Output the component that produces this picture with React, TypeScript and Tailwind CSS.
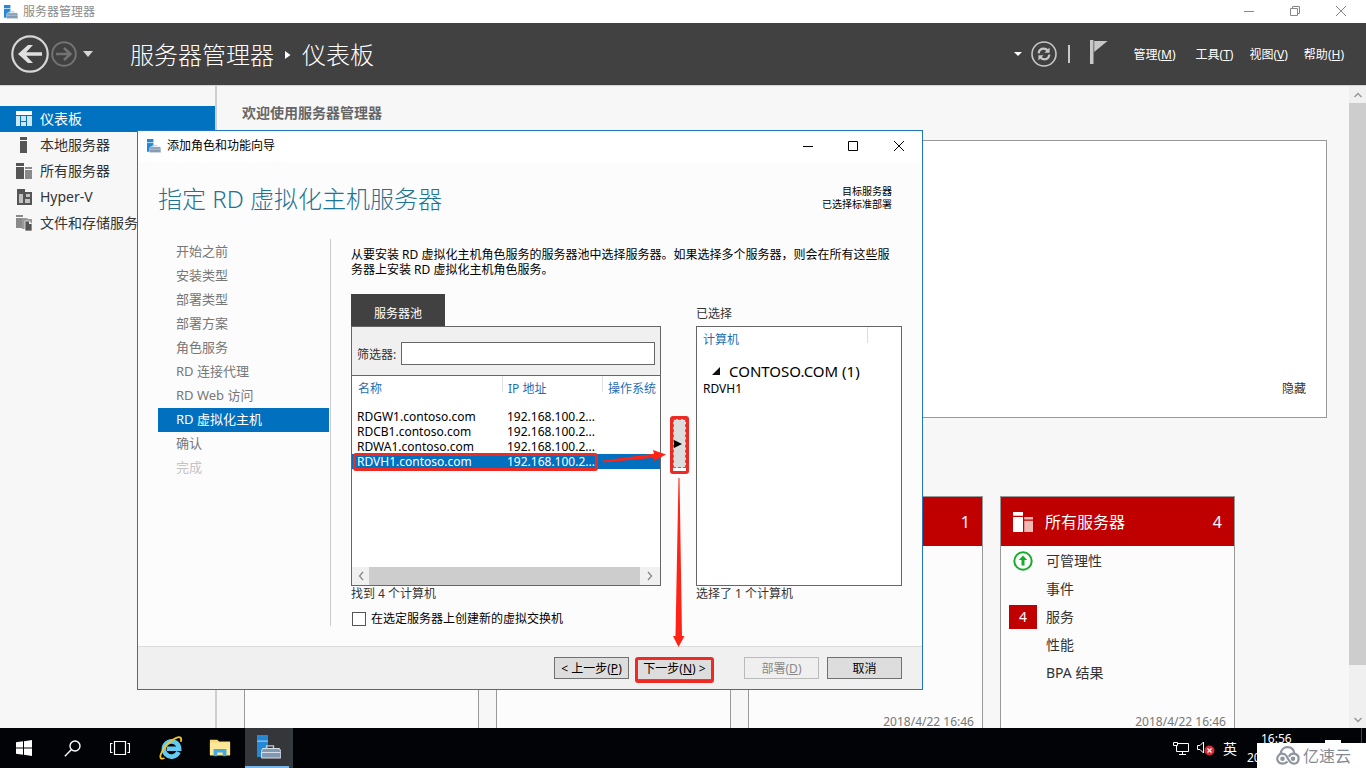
import type { ReactNode } from "react";

const uiFont = "font-['Noto_Sans','Noto_Sans_CJK_SC',sans-serif]";

function ServerManagerIcon({ className }: { className: string }) {
  return (
    <svg viewBox="0 0 24 24" className={className} aria-hidden="true">
      <path d="M0 0h11v6H0z" fill="#2389d6" />
      <path d="M0 7h11v6H7v9H0z" fill="#2389d6" />
      <path d="M0 6.2h11" stroke="#cfe6f7" strokeWidth="1" />
      <path d="M9.5 13.5v-2.6h7v2.6" fill="none" stroke="#b9c9d8" strokeWidth="1.4" />
      <path d="M5.5 13.5h17l1.3 3V23H4.5v-6.5z" fill="#8199b3" stroke="#d6dfe8" strokeWidth="1" />
      <path d="M5 17.5h18.5" stroke="#d6dfe8" strokeWidth="1" />
    </svg>
  );
}

function DashboardIcon() {
  return (
    <svg viewBox="0 0 16 16" className="size-4" aria-hidden="true">
      <path d="M0 0h16v4H0z" fill="#fff" />
      <path d="M0 5h4v10H0zM5 5h5v5H5zM5 11h5v4H5zM11 5h5v10h-5z" fill="#cfe6f6" />
    </svg>
  );
}

function LocalServerIcon() {
  return (
    <svg viewBox="0 0 16 16" className="size-4" aria-hidden="true">
      <path d="M4 0h7v3H4zM4 4h7v12H4z" fill="#555" />
    </svg>
  );
}

function AllServersIcon({ className, front, back }: { className: string; front: string; back: string }) {
  return (
    <svg viewBox="0 0 16 16" className={className} aria-hidden="true">
      <path d="M0 0h8v3H0zM0 4h8v12H0z" fill={front} />
      <path d="M9 4h7v2H9zM9 7h7v9H9z" fill={back} />
    </svg>
  );
}

function HyperVIcon() {
  return (
    <svg viewBox="0 0 16 16" className="size-4" aria-hidden="true">
      <path d="M1 0h8v3h7v13H1z" fill="#555" />
      <path d="M3 5h4v9H3zM10 5h4v3h-4zM9 10h5v4H9z" fill="#c0c0c0" />
    </svg>
  );
}

function StorageIcon() {
  return (
    <svg viewBox="0 0 16 16" className="size-4" aria-hidden="true">
      <path d="M0 0h7v2H0zM0 3h7v10H0z" fill="#8a8a8a" />
      <path d="M6 3h5l1 1h4v10H6z" fill="#999" />
      <path d="M9 6h4l3 3v7H9z" fill="#555" stroke="#f7f7f7" strokeWidth=".7" />
      <path d="M13 6v3h3z" fill="#eee" />
    </svg>
  );
}

const sideItems: { label: string; icon: ReactNode; active?: boolean }[] = [
  { label: "仪表板", icon: <DashboardIcon />, active: true },
  { label: "本地服务器", icon: <LocalServerIcon /> },
  { label: "所有服务器", icon: <AllServersIcon className="size-4" front="#555" back="#8a8a8a" /> },
  { label: "Hyper-V", icon: <HyperVIcon /> },
  { label: "文件和存储服务", icon: <StorageIcon /> },
];

const menus = [
  { label: "管理", key: "M", gap: "mr-5" },
  { label: "工具", key: "T", gap: "mr-4" },
  { label: "视图", key: "V", gap: "mr-4" },
  { label: "帮助", key: "H", gap: "mr-[22px]" },
];

function TitleBar() {
  return (
    <div className="flex h-[23px] shrink-0 items-center bg-white pl-1 text-xs text-[#8a8a8a]">
      <ServerManagerIcon className="size-3.5" />
      <span className="ml-[5px] flex-1">服务器管理器</span>
      <div className="flex self-start text-[#888]">
        <button aria-label="最小化" className="grid h-[21px] w-[46px] place-items-center">
          <svg className="size-3" viewBox="0 0 12 12" fill="none" stroke="currentColor"><path d="M1 6.500h10" /></svg>
        </button>
        <button aria-label="还原" className="grid h-[21px] w-[46px] place-items-center">
          <svg className="size-3" viewBox="0 0 12 12" fill="none" stroke="currentColor"><path d="M1.500 3.500h7v7h-7zM3.500 3.500v-2h7v7h-2" /></svg>
        </button>
        <button aria-label="关闭" className="mr-[2px] grid h-[21px] w-[46px] place-items-center">
          <svg className="size-3" viewBox="0 0 12 12" fill="none" stroke="currentColor"><path d="M1 1l10 10M11 1L1 11" /></svg>
        </button>
      </div>
    </div>
  );
}

function Header() {
  return (
    <header className="flex h-[62px] shrink-0 items-center bg-[#414141] pl-[11px] text-white">
      <button aria-label="后退">
        <svg className="size-[38px]" viewBox="0 0 38 38" fill="none">
          <circle cx="19" cy="19" r="17.700" stroke="#d6d6d6" strokeWidth="2.200" />
          <path d="M31 17.200v3.600H15.200l6.800 7.200h-5L7 19l10-9h5l-6.800 7.200z" fill="#e0e0e0" />
        </svg>
      </button>
      <button aria-label="前进" className="ml-[2px]">
        <svg className="size-[26px]" viewBox="0 0 26 26" fill="none" stroke="#737373">
          <circle cx="13" cy="13" r="11.800" strokeWidth="2" />
          <path d="M5 13h14M13 7l6.500 6-6.500 6" strokeWidth="2.500" />
        </svg>
      </button>
      <button aria-label="历史记录" className="ml-[5px]">
        <svg className="h-1.5 w-3" viewBox="0 0 12 6"><path d="M1 0h10L6 6z" fill="#d6d6d6" /></svg>
      </button>
      <div className="ml-9 flex flex-1 items-center pt-px text-2xl font-light">
        <span>服务器管理器</span>
        <svg className="mx-[11px] h-2 w-1.5" viewBox="0 0 6 8"><path d="M0 0l5.500 4L0 8z" fill="#fff" /></svg>
        <span>仪表板</span>
      </div>
      <button aria-label="选项" className="mr-[9px]">
        <svg className="h-1 w-2" viewBox="0 0 8 4"><path d="M0 0h8L4 4z" fill="#fff" /></svg>
      </button>
      <button aria-label="刷新">
        <svg className="size-[26px]" viewBox="0 0 26 26" fill="none" stroke="#c8c8c8">
          <circle cx="13" cy="13" r="12" strokeWidth="1.600" />
          <path d="M7.600 12.300c.5-3.300 2.700-4.600 5-4.600 1.900 0 3.200.7 4.300 2M18.400 13.700c-.5 3.300-2.700 4.600-5 4.600-1.900 0-3.200-.7-4.300-2" strokeWidth="2.200" />
          <path d="M18.600 6.500v5.200h-5.200zM7.400 19.500v-5.200h5.200z" fill="#c8c8c8" stroke="none" />
        </svg>
      </button>
      <div className="mb-px ml-[11px] mr-5 h-[18px] w-[2px] bg-[#c8c8c8]" />
      <button aria-label="通知" className="mb-1 mr-[25px]">
        <svg className="h-6 w-[18px]" viewBox="0 0 18 24"><path d="M0 0h3.500v24H0zM4.200 1H17.500L4.200 12z" fill="#c8c8c8" /></svg>
      </button>
      {menus.map((m) => (
        <button key={m.key} className={`${m.gap} pt-[2px] text-xs`}>
          {m.label}(<span className="underline">{m.key}</span>)
        </button>
      ))}
    </header>
  );
}

function SideBar() {
  return (
    <nav className="w-[217px] shrink-0 border-r-2 border-[#cfcfcf] pt-5 text-sm text-[#333]">
      {sideItems.map((s) => (
        <a
          key={s.label}
          href="#"
          className={`flex h-[26px] items-center gap-2 pl-4 ${s.active ? "bg-[#0072bf] text-white" : ""}`}
        >
          {s.icon}
          {s.label}
        </a>
      ))}
    </nav>
  );
}

function Card({ title, count, children }: { title: string; count: number; children?: ReactNode }) {
  return (
    <section className="h-[270px] w-[235px] shrink-0 border border-[#999] bg-[#fcfcfc]">
      <h3 className="flex h-[49px] items-center bg-[#c00000] px-3 text-base text-white">
        <AllServersIcon className="size-5" front="#fff" back="#f2b9b4" />
        <span className="ml-3 flex-1">{title}</span>
        <span>{count}</span>
      </h3>
      {children}
    </section>
  );
}

const metrics = ["可管理性", "事件", "服务", "性能", "BPA 结果"];

function Metrics() {
  return (
    <>
      <ul className="pt-px text-sm text-[#333]">
        {metrics.map((m) => (
          <li key={m} className="flex h-7 items-center">
            <span className="ml-2 mr-[9px] grid h-6 w-7 place-items-center">
              {m === "可管理性" && (
                <svg className="size-5" viewBox="0 0 20 20">
                  <circle cx="10" cy="10" r="8.700" fill="none" stroke="#1bab2b" strokeWidth="2" />
                  <path d="M10 4.500l4.200 4.500h-2.700v5.500h-3V9H5.800z" fill="#1bab2b" />
                </svg>
              )}
              {m === "服务" && <span className="grid h-6 w-7 place-items-center bg-[#c00000] text-white">4</span>}
            </span>
            {m}
          </li>
        ))}
      </ul>
      <Stamp className="mt-7" />
    </>
  );
}

function Stamp({ className }: { className: string }) {
  return <p className={`${className} pr-2 text-right text-xs leading-[14px] text-[#777]`}>2018/4/22 16:46</p>;
}

function Dashboard() {
  return (
    <main className="min-w-0 flex-1 overflow-hidden pl-[27px] pr-[22px]">
      <h2 className="-ml-[2px] h-[54px] pt-[17px] text-sm font-bold leading-5 text-[#666]">欢迎使用服务器管理器</h2>
      <section className="flex h-[278px] items-end justify-end border border-[#999] bg-white p-5 text-xs leading-4 text-[#333]">
        <button>隐藏</button>
      </section>
      <div className="mt-[78px] flex gap-[17px]">
        <Card title="角色" count={1} />
        <Card title="角色" count={1} />
        <Card title="本地服务器" count={1}>
          <Stamp className="mt-[169px]" />
        </Card>
        <Card title="所有服务器" count={4}>
          <Metrics />
        </Card>
      </div>
    </main>
  );
}

function VerticalScrollBar() {
  return (
    <div className="flex w-[17px] shrink-0 flex-col bg-[#f0f0f0]">
      <span className="grid h-[17px] place-items-center">
        <svg className="h-1.5 w-2.5" viewBox="0 0 10 6" fill="none" stroke="#999" strokeWidth="1.500"><path d="M1.500 5L5 1.500 8.500 5" /></svg>
      </span>
      <span className="h-[562px] bg-[#cdcdcd]" />
      <span className="mt-auto grid h-[17px] place-items-center">
        <svg className="h-1.5 w-2.5" viewBox="0 0 10 6" fill="none" stroke="#999" strokeWidth="1.500"><path d="M1.500 1L5 4.500 8.500 1" /></svg>
      </span>
    </div>
  );
}

const steps = [
  "开始之前",
  "安装类型",
  "部署类型",
  "部署方案",
  "角色服务",
  "RD 连接代理",
  "RD Web 访问",
  "RD 虚拟化主机",
  "确认",
  "完成",
];

const servers = ["RDGW1.contoso.com", "RDCB1.contoso.com", "RDWA1.contoso.com", "RDVH1.contoso.com"];

function Pool() {
  return (
    <div className="w-[310px]">
      <button className="block h-8 w-[94px] bg-[#414141] pt-2 text-xs text-white">服务器池</button>
      <div className="relative flex h-[260px] flex-col border border-[#666] bg-white">
        <div className="flex h-[49px] items-center border-b border-[#666] bg-[#f0f0f0] px-[5px] pt-1">
          <label htmlFor="filter" className="w-11 whitespace-nowrap pt-[3px]">筛选器:</label>
          <input id="filter" className="h-[23px] min-w-0 flex-1 border border-[#666] bg-white px-1" />
        </div>
        <table className="w-full table-fixed border-collapse text-left">
          <colgroup>
            <col className="w-[150px]" />
            <col className="w-[100px]" />
            <col />
          </colgroup>
          <thead>
            <tr className="h-[33px] align-top text-[#1c6fb5]">
              <th className="pl-1.5 pt-[5px] font-normal leading-4">名称</th>
              <th className="bg-[linear-gradient(#e2e2e2,#e2e2e2)] bg-[length:1px_16px] bg-no-repeat pl-1.5 pt-[5px] font-normal leading-4">IP 地址</th>
              <th className="whitespace-nowrap bg-[linear-gradient(#e2e2e2,#e2e2e2)] bg-[length:1px_16px] bg-no-repeat pl-1.5 pt-[5px] font-normal leading-4">操作系统</th>
            </tr>
          </thead>
          <tbody className="leading-[15px]">
            {servers.map((s) => (
              <tr key={s} className={s.startsWith("RDVH1") ? "bg-[#0070bf] text-white" : "text-black"}>
                <td className="p-0 pl-[5px]">{s}</td>
                <td className="whitespace-nowrap p-0 pl-[5px]">192.168.100.2...</td>
                <td className="p-0" />
              </tr>
            ))}
          </tbody>
        </table>
        <div className="absolute left-px top-[126px] h-[18px] w-[245px] rounded-[3px] border-[3px] border-[#ee2a24]" />
        <div className="mt-auto flex h-[18px] bg-[#f0f0f0]">
          <span className="grid w-[17px] place-items-center">
            <svg className="h-2.5 w-1.5" viewBox="0 0 6 10" fill="none" stroke="#888" strokeWidth="1.300"><path d="M5 1L1.500 5 5 9" /></svg>
          </span>
          <span className="flex-1 bg-[#cdcdcd]" />
          <span className="grid w-5 place-items-center">
            <svg className="h-2.5 w-1.5" viewBox="0 0 6 10" fill="none" stroke="#888" strokeWidth="1.300"><path d="M1 1l3.500 4L1 9" /></svg>
          </span>
        </div>
      </div>
      <p className="leading-4">找到 4 个计算机</p>
      <label className="mt-[9px] flex items-center gap-[5px] leading-4 text-black">
        <input type="checkbox" className="ml-px size-3.5 appearance-none border border-[#555] bg-white" />
        在选定服务器上创建新的虚拟交换机
      </label>
    </div>
  );
}

function Selected() {
  return (
    <div className="w-[206px]">
      <h3 className="h-8 pt-3 leading-4">已选择</h3>
      <div className="h-[260px] border border-[#666] bg-white text-black">
        <div className="mr-[33px] h-4 border-r border-[#ddd] pl-1.5 pt-[5px] leading-4 text-[#1c6fb5]">计算机</div>
        <div className="mt-[18px] flex h-[19px] items-center pl-[15px] text-[15px]">
          <svg className="mr-[9px] size-2" viewBox="0 0 8 8"><path d="M8 0v8H0z" fill="#111" /></svg>
          CONTOSO.COM (1)
        </div>
        <div className="pl-[6px] pt-px leading-4">RDVH1</div>
      </div>
      <p className="leading-4">选择了 1 个计算机</p>
    </div>
  );
}

function Wizard() {
  return (
    <div
      role="dialog"
      aria-label="添加角色和功能向导"
      className="absolute left-[137px] top-[130px] flex h-[560px] w-[786px] flex-col border border-[#1f78bf] bg-[#fcfcfc] text-xs text-[#333]"
    >
      <div className="flex h-[31px] shrink-0 items-center bg-white pb-[2px] pl-[9px] text-black">
        <ServerManagerIcon className="size-3.5" />
        <span className="ml-1.5 flex-1">添加角色和功能向导</span>
        <button aria-label="最小化" className="grid h-full w-[46px] place-items-center">
          <svg className="size-3" viewBox="0 0 12 12" fill="none" stroke="currentColor"><path d="M1 6.500h10" /></svg>
        </button>
        <button aria-label="最大化" className="grid h-full w-11 place-items-center">
          <svg className="size-3" viewBox="0 0 12 12" fill="none" stroke="currentColor"><path d="M1.500 1.500h9v9h-9z" /></svg>
        </button>
        <button aria-label="关闭" className="grid h-full w-[47px] place-items-center">
          <svg className="size-3" viewBox="0 0 12 12" fill="none" stroke="currentColor"><path d="M1 1l10 10M11 1L1 11" /></svg>
        </button>
      </div>
      <div className="flex h-[77px] shrink-0 items-start justify-between pl-5 pr-[30px]">
        <h1 className="pt-[19px] text-2xl font-light leading-9 text-[#1f7395]">指定 RD 虚拟化主机服务器</h1>
        <p className="pt-[23px] text-right text-[10px] leading-[13px] text-black">
          目标服务器
          <br />
          已选择标准部署
        </p>
      </div>
      <div className="flex min-h-0 flex-1 pl-5">
        <ol className="mb-5 w-[173px] shrink-0 border-r border-[#ccc] pt-px text-[13px] text-[#777]">
          {steps.map((s) => (
            <li
              key={s}
              className={`mr-px flex h-6 items-center pl-[18px] ${
                s === "RD 虚拟化主机" ? "bg-[#0070bf] text-white" : s === "完成" ? "text-[#c4c4c4]" : ""
              }`}
            >
              {s}
            </li>
          ))}
        </ol>
        <div className="flex-1 pl-5 pt-2">
          <p className="leading-[15px] text-black">
            从要安装 RD 虚拟化主机角色服务的服务器池中选择服务器。如果选择多个服务器，则会在所有这些服
            <br />
            务器上安装 RD 虚拟化主机角色服务。
          </p>
          <div className="mt-[17px] flex">
            <Pool />
            <div className="w-[35px] pl-[9px] pt-[122px]">
              <div className="h-[58px] w-[19px] rounded-[3px] border-[3px] border-[#ee2a24] bg-white">
                <button
                  aria-label="添加"
                  className="flex h-[49px] w-[13px] items-center border border-dashed border-[#777] bg-[#ddd]"
                >
                  <svg className="h-2 w-2" viewBox="0 0 8 8"><path d="M0 0l8 4-8 4z" fill="#000" /></svg>
                </button>
              </div>
            </div>
            <Selected />
          </div>
        </div>
      </div>
      <div className="flex h-[43px] shrink-0 items-center justify-end border-t border-[#dcdcdc] bg-[#f0f0f0] pr-5 text-black">
        <button className="h-[22px] w-[75px] border border-[#707070] bg-[#ddd] pt-px">
          &lt; 上一步(<span className="underline">P</span>)
        </button>
        <div className="ml-1.5 mr-[30px] mt-[3px] rounded-[3px] border-[3px] border-[#ee2a24]">
          <button className="block h-[20px] w-[73px] whitespace-nowrap border-b border-[#707070] bg-[#ddd]">
            下一步(<span className="underline">N</span>) &gt;
          </button>
        </div>
        <button className="mr-2 h-[22px] w-[75px] border border-[#bbb] bg-[#efefef] pt-px text-[#888]">
          部署(<span className="underline">D</span>)
        </button>
        <button className="h-[22px] w-[75px] border border-[#707070] bg-[#ddd] pt-px">取消</button>
      </div>
      <svg
        className="pointer-events-none absolute left-[462px] top-[309px] h-[210px] w-[100px]"
        viewBox="600 440 100 210"
        fill="#ff2316"
        aria-hidden="true"
      >
        <path d="M603 460.500l51-6.800-1-3.700 13 4.500-12 6.500-.4-3.200L603 462.500z" />
        <path d="M679.500 478l2.500 158h2.500L678.500 647 673 636h2.500L678.500 478z" />
      </svg>
    </div>
  );
}

function TaskBar() {
  const item = "grid h-full w-12 place-items-center";
  return (
    <footer className="flex h-10 shrink-0 items-center bg-[#020307] text-white">
      <button aria-label="开始" className={item}>
        <svg className="size-4" viewBox="0 0 16 16" fill="#fff"><path d="M0 2.300L7 1.300v6.200H0zM8 1.200L16 0v7.500H8zM0 8.500h7v6.200l-7-1zM8 8.500h8V16l-8-1.200z" /></svg>
      </button>
      <button aria-label="搜索" className={item}>
        <svg className="size-[17px]" viewBox="0 0 17 17" fill="none" stroke="#fff" strokeWidth="1.400"><circle cx="11" cy="6" r="5" /><path d="M7.500 9.500L.8 16.200" /></svg>
      </button>
      <button aria-label="任务视图" className={item}>
        <svg className="h-4 w-5" viewBox="0 0 20 16" fill="none" stroke="#fff" strokeWidth="1.200"><path d="M4.500 1.500h11v13h-11zM2.500 3.500h-2v9h2M17.500 3.500h2v9h-2" /></svg>
      </button>
      <button aria-label="Internet Explorer" className="grid h-full w-[54px] place-items-center">
        <svg className="size-6" viewBox="0 0 24 24" fill="none">
          <path d="M19.500 16a7.600 7.600 0 1 1 .6-3.300H8" stroke="#63cbf3" strokeWidth="4.600" />
          <path d="M5.500 22C1.800 23.800.2 21.600 2.300 17 5 10.500 11.500 4 17.300 1.800c4.200-1.600 5.700.1 4.500 4" stroke="#f5c528" strokeWidth="1.800" />
        </svg>
      </button>
      <button aria-label="文件资源管理器" className="grid h-full w-[43px] place-items-center">
        <svg className="h-5 w-[22px]" viewBox="0 0 24 20">
          <path d="M1 1h8l2 2h12v15H1z" fill="#f9d978" />
          <path d="M1 4h22v14H1z" fill="#fde798" />
          <path d="M5 11h14v8h-4v-4h-6v4H5z" fill="#45a9dc" />
        </svg>
      </button>
      <div className="ml-1 flex h-full w-12 bg-[#333a40]">
        <button aria-label="服务器管理器" className="grid h-full w-11 place-items-center border-b-2 border-[#76b9ed] bg-[#343639] pl-1">
          <ServerManagerIcon className="size-6" />
        </button>
      </div>
      <div className="relative ml-auto flex h-full w-[193px] items-center">
        <svg className="h-4 w-4" viewBox="0 0 16 16" fill="none" stroke="#fff">
          <path d="M5 3.500h10.500v8H3.500V6M9.500 11.500v3M6 14.500h7M.5 2.500h4v3h-4z" />
        </svg>
        <svg className="ml-2 h-4 w-[18px]" viewBox="0 0 18 16">
          <path d="M.5 5.500h2.500L6.500 2v11L3 9.500H.5z" fill="none" stroke="#fff" />
          <circle cx="12.500" cy="10.500" r="5" fill="#dc2a35" />
          <path d="M10.500 8.500l4 4M14.500 8.500l-4 4" stroke="#fff" strokeWidth="1.200" />
        </svg>
        <span className="ml-2 pt-px text-sm">英</span>
        <div className="ml-2.5 self-start text-xs leading-[19px]">
          <div className="ml-3.5 pt-px">16:56</div>
          <div>2018/4/22</div>
        </div>
        <span className="absolute right-[25px] top-3 h-1 w-4 bg-white" />
        <span className="absolute right-1 top-0 h-4 w-px bg-[#444]" />
        <div className="absolute bottom-0 right-0 flex h-[25px] w-[109px] items-center bg-white pl-[18px] text-[#858b95]">
          <svg className="h-[19px] w-[25px]" viewBox="0 0 25 19" fill="none" stroke="#8f959e" strokeWidth="2.200">
            <path d="M5.500 8C6 3.700 9 1.200 12.500 1.200S19 3.500 19.500 8" />
            <path d="M12.500 15.500c-1.500 1.500-3.300 2.200-5.500 2.200A5 5 0 1 1 11.500 10c1.500 2.500 3 7.700 7.200 7.700a5 5 0 1 0-4.700-7" />
            <circle cx="7.500" cy="12.700" r="1.200" />
            <circle cx="18" cy="12.700" r="1.200" />
          </svg>
          <span className="ml-[3px] text-base">亿速云</span>
        </div>
      </div>
    </footer>
  );
}

export default function App() {
  return (
    <div className={`${uiFont} relative flex h-screen flex-col overflow-hidden bg-[#f7f7f7]`}>
      <TitleBar />
      <Header />
      <div className="flex min-h-0 flex-1 border-t border-[#d5d5d5]">
        <SideBar />
        <Dashboard />
        <VerticalScrollBar />
      </div>
      <TaskBar />
      <Wizard />
    </div>
  );
}
